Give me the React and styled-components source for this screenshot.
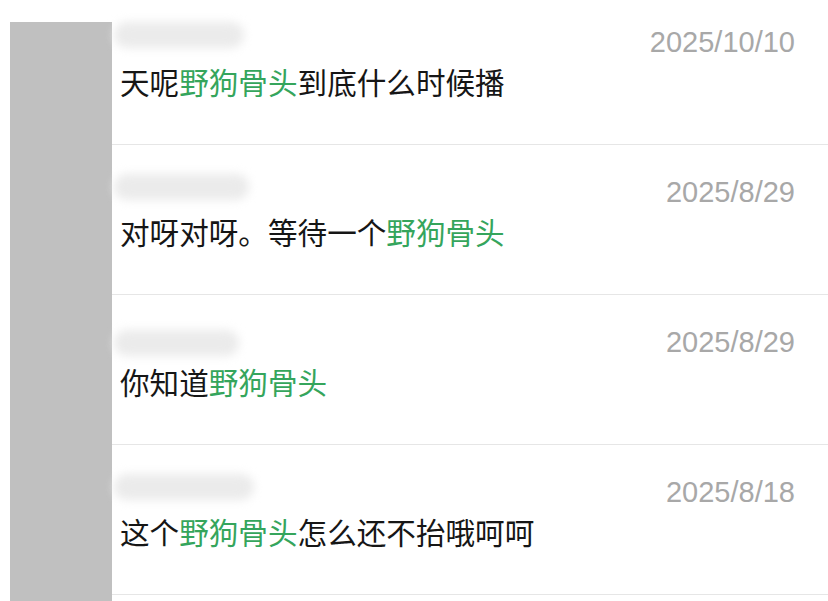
import React from "react";
import styled, { createGlobalStyle } from "styled-components";

const GlobalStyle = createGlobalStyle`
    html, body {
        margin: 0;
        padding: 0;
        background: #ffffff;
        overflow: hidden;
    }
`;

const Page = styled.div`
    display: flex;
    width: 828px;
    height: 601px;
    overflow: hidden;
    background: #ffffff;
`;

const Avatar = styled.div`
    flex: 0 0 102px;
    margin-top: 22px;
    margin-left: 10px;
    background: #c0c0c0;
`;

const List = styled.div`
    flex: 1;
    display: flex;
    flex-direction: column;
`;

const Row = styled.div`
    flex: 0 0 auto;
    box-sizing: border-box;
    height: ${(p) => (p.$cropped ? 145 : 150)}px;
    padding: ${(p) => (p.$cropped ? 24 : 29)}px 33px 0 8px;
    border-bottom: 1px solid #e6e6e6;
`;

const Header = styled.div`
    display: flex;
    justify-content: space-between;
    align-items: center;
    height: 34px;
`;

const Name = styled.div`
    width: ${(p) => p.$w}px;
    height: 26px;
    margin-left: -6px;
    border-radius: 13px;
    background: #ebebeb;
    filter: blur(5px);
    transform: translateY(${(p) => p.$dy}px);
`;

const Date = styled.div`
    font-family: "Liberation Sans", Arial, sans-serif;
    font-size: 29px;
    line-height: 34px;
    color: #a8a8a8;
    transform: translateY(1px);
`;

const Message = styled.div`
    margin-top: 4px;
    font-family: "Noto Sans CJK SC", "Noto Sans", sans-serif;
    font-size: 29.6px;
    line-height: 40px;
    color: #161616;
`;

const Topic = styled.span`
    color: #35a55c;
`;

const comments = [
    { date: "2025/10/10", before: "天呢", after: "到底什么时候播", w: 130, dy: -6 },
    { date: "2025/8/29", before: "对呀对呀。等待一个", after: "", w: 135, dy: -4 },
    { date: "2025/8/29", before: "你知道", after: "", w: 125, dy: 2 },
    { date: "2025/8/18", before: "这个", after: "怎么还不抬哦呵呵", w: 140, dy: -4 },
];

export default function App() {
    return (
        <>
            <GlobalStyle />
            <Page>
                <Avatar />
                <List>
                    {comments.map((c, i) => (
                        <Row key={i} $cropped={i === 0}>
                            <Header>
                                <Name $w={c.w} $dy={c.dy} />
                                <Date>{c.date}</Date>
                            </Header>
                            <Message>
                                {c.before}
                                <Topic>野狗骨头</Topic>
                                {c.after}
                            </Message>
                        </Row>
                    ))}
                    <Row />
                </List>
            </Page>
        </>
    );
}
